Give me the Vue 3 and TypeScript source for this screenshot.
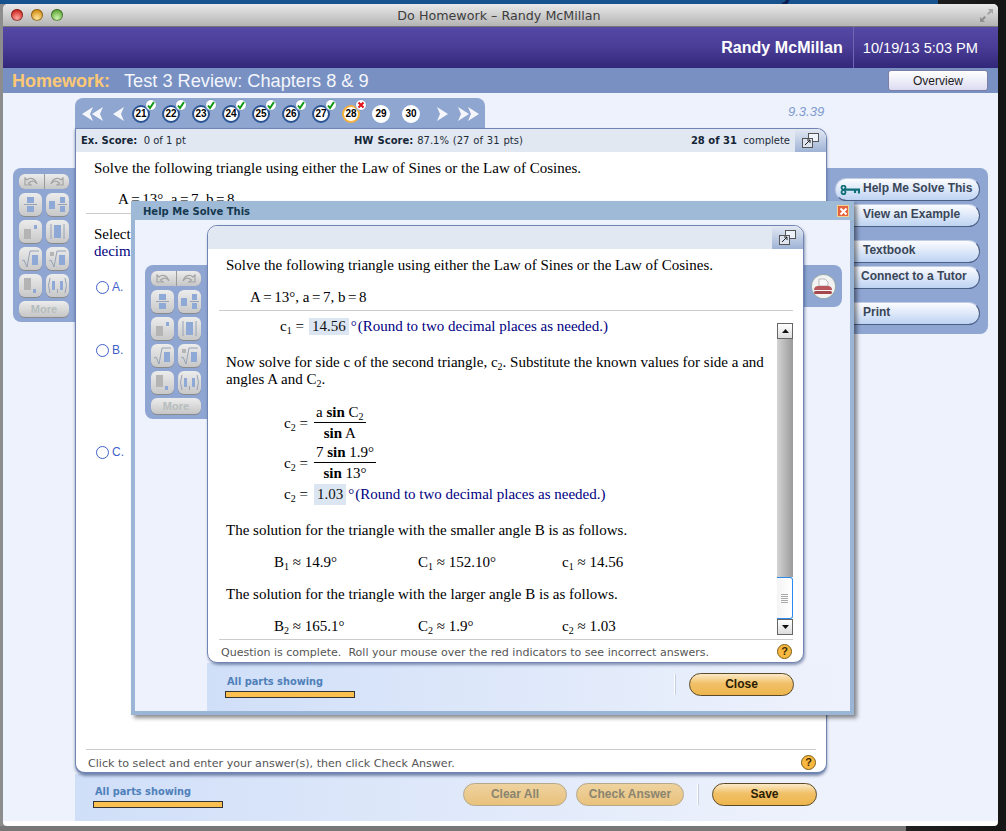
<script setup lang="ts">
interface Q { n: number; state: 'ok' | 'bad' | 'none' }
const questions: Q[] = [
  { n: 21, state: 'ok' }, { n: 22, state: 'ok' }, { n: 23, state: 'ok' }, { n: 24, state: 'ok' },
  { n: 25, state: 'ok' }, { n: 26, state: 'ok' }, { n: 27, state: 'ok' }, { n: 28, state: 'bad' },
  { n: 29, state: 'none' }, { n: 30, state: 'none' },
]
const B = '#8fa9d6'
const G = '#b4b4b4'
const tools = [
  { r: [[8, 4, 7, 6, B], [8, 13, 7, 6, B]], p: ['M5 11.5H18'] },
  { r: [[3, 8, 6, 8, B], [14, 4, 5, 6, B], [14, 13, 5, 6, B]], p: ['M12 11.5H21'] },
  { r: [[5, 9, 7, 10, G], [15, 5, 3, 4, B]], p: [] },
  { r: [[8, 5, 7, 13, B]], p: ['M5 4V19', 'M18 4V19'] },
  { r: [[13, 8, 6, 10, B]], p: ['M3 14L5 13L8 20L11 4H20'] },
  { r: [[13, 8, 6, 10, B], [4, 5, 4, 4, G]], p: ['M3 14L5 13L8 20L11 4H20'] },
  { r: [[5, 4, 7, 12, G], [14, 15, 3, 4, B]], p: [] },
  { r: [[6, 7, 3, 9, B], [14, 7, 3, 9, B]], p: ['M4 4Q1 11.5 4 19', 'M19 4Q22 11.5 19 19', 'M11.5 15V19'] },
]
</script>

<template>
  <div class="desk">
    <div class="topstrip"><span class="brand">MyMathLab</span></div>
    <div class="window">
      <div class="titlebar">
        <span class="light red"></span><span class="light amber"></span><span class="light green"></span>
        <span class="wintitle">Do Homework – Randy McMillan</span>
        <svg class="winexpand" width="15" height="15" viewBox="0 0 15 15">
          <path d="M9 1H14V6L12.3 4.3L9.5 7L8 5.5L10.7 2.7Z" fill="#a6a6a6" />
          <path d="M6 14H1V9L2.7 10.7L5.5 8L7 9.5L4.3 12.3Z" fill="#8f8f8f" />
        </svg>
      </div>
      <header class="header">
        <span class="uname">Randy McMillan</span>
        <span class="utime">10/19/13 5:03 PM</span>
      </header>
      <div class="subbar">
        <span class="hw">Homework:</span>
        <span class="hwtitle">Test 3 Review: Chapters 8 &amp; 9</span>
        <button class="overview">Overview</button>
      </div>

      <div class="content">
        <div class="leftcol">
          <div class="palette">
            <div class="undo">
              <span><svg width="16" height="10" viewBox="0 0 16 10"><path d="M2 1V8H8L5.5 6C9 3 12 4 14 7C12 1 7 0 4 3Z" fill="none" stroke="#a3a3a3" stroke-width="1.2" /></svg></span>
              <span><svg width="16" height="10" viewBox="0 0 16 10"><path d="M14 1V8H8L10.5 6C7 3 4 4 2 7C4 1 9 0 12 3Z" fill="none" stroke="#a3a3a3" stroke-width="1.2" /></svg></span>
            </div>
            <div class="toolgrid">
              <span v-for="(t, i) in tools" :key="i" class="tool">
                <svg width="23" height="23" viewBox="0 0 23 23">
                  <rect v-for="(r, j) in t.r" :key="j" :x="r[0]" :y="r[1]" :width="r[2]" :height="r[3]" :fill="String(r[4])" />
                  <path v-for="(d, k) in t.p" :key="k" :d="d" fill="none" stroke="#97a3b5" stroke-width="1" />
                </svg>
              </span>
            </div>
            <div class="more">More</div>
          </div>
        </div>

        <div class="center">
          <div class="navrow">
            <nav class="tabs">
              <svg class="arrow dbl" width="21" height="14" viewBox="0 0 21 14"><path d="M0 7L11 0L8 7L11 14Z M10 7L21 0L18 7L21 14Z" fill="#f4f6fb" /></svg>
              <svg class="arrow" width="11" height="14" viewBox="0 0 11 14"><path d="M0 7L11 0L8 7L11 14Z" fill="#f4f6fb" /></svg>
              <div class="qs">
                <span v-for="q in questions" :key="q.n" class="q" :class="{ plain: q.state === 'none', cur: q.n === 28 }">
                  {{ q.n }}
                  <span v-if="q.state !== 'none'" class="badge">
                    <svg v-if="q.state === 'ok'" width="10" height="10" viewBox="0 0 10 10"><path d="M2 5.5L4 8L8 2" fill="none" stroke="#119a18" stroke-width="2" /></svg>
                    <svg v-else width="10" height="10" viewBox="0 0 10 10"><path d="M2.5 2.5L7.5 7.5M7.5 2.5L2.5 7.5" fill="none" stroke="#e0131a" stroke-width="2" /></svg>
                  </span>
                </span>
              </div>
              <svg class="arrow next" width="11" height="14" viewBox="0 0 11 14"><path d="M11 7L0 0L3 7L0 14Z" fill="#f4f6fb" /></svg>
              <svg class="arrow last" width="21" height="14" viewBox="0 0 21 14"><path d="M11 7L0 0L3 7L0 14Z M21 7L10 0L13 7L10 14Z" fill="#f4f6fb" /></svg>
            </nav>
            <span class="version">9.3.39</span>
          </div>

          <main class="card">
            <div class="cardhead">
              <span class="ex"><b>Ex. Score:</b>&nbsp; 0 of 1 pt</span>
              <span class="hwscore"><b>HW Score:</b> 87.1% (27 of 31 pts)</span>
              <span class="done"><b>28 of 31</b>&nbsp; complete</span>
              <span class="expand">
                <svg width="17" height="15" viewBox="0 0 17 15"><rect x="6.5" y="0.5" width="10" height="8" fill="#eef2fa" stroke="#555" /><rect x="0.5" y="5.5" width="10" height="9" fill="#dfe5f0" stroke="#555" /><path d="M3 12L8 7M5 7H8V10" fill="none" stroke="#222" /></svg>
              </span>
            </div>
            <div class="cardbody">
              <p class="stem">Solve the following triangle using either the Law of Sines or the Law of Cosines.</p>
              <p class="given">A<i class="op">=</i>13°, a<i class="op">=</i>7, b<i class="op">=</i>8</p>
              <div class="rule r1"></div>
              <p class="select">Select</p>
              <p class="decim">decim</p>
              <div class="choice ca"><i class="radio"></i>A.</div>
              <div class="choice cb"><i class="radio"></i>B.</div>
              <div class="choice cc"><i class="radio"></i>C.</div>
            </div>
            <div class="cardfoot">
              <span class="foottext">Click to select and enter your answer(s), then click Check Answer.</span>
              <span class="help">?</span>
            </div>
          </main>

          <div class="bottombar">
            <div class="parts">
              <span>All parts showing</span>
              <i class="progress"></i>
            </div>
            <button class="pill dim clear">Clear All</button>
            <button class="pill dim check">Check Answer</button>
            <i class="sep"></i>
            <button class="pill save">Save</button>
          </div>
        </div>

        <aside class="sidepanel">
          <button class="side">
            <svg class="key" width="20" height="10" viewBox="0 0 20 10"><circle cx="3.5" cy="2.6" r="2" fill="none" stroke="#0f6f78" stroke-width="1.8" /><circle cx="3.5" cy="7.2" r="2" fill="none" stroke="#0f6f78" stroke-width="1.8" /><path d="M5 4.6H19V8.5M15 4.6V8" fill="none" stroke="#0f6f78" stroke-width="2.2" /></svg>
            Help Me Solve This
          </button>
          <button class="side">View an Example</button>
          <button class="side gap">Textbook</button>
          <button class="side tutor">Connect to a Tutor</button>
          <button class="side gap">Print</button>
        </aside>
      </div>

      <section class="dialog">
        <div class="dlgtitle">
          <span>Help Me Solve This</span>
          <i class="close"><svg width="11" height="11" viewBox="0 0 11 11"><path d="M2.5 2.5L8.5 8.5M8.5 2.5L2.5 8.5" stroke="#fff" stroke-width="2" /></svg></i>
        </div>
        <div class="dlgmain">
          <div class="palette dpal">
            <div class="undo">
              <span><svg width="16" height="10" viewBox="0 0 16 10"><path d="M2 1V8H8L5.5 6C9 3 12 4 14 7C12 1 7 0 4 3Z" fill="none" stroke="#a3a3a3" stroke-width="1.2" /></svg></span>
              <span><svg width="16" height="10" viewBox="0 0 16 10"><path d="M14 1V8H8L10.5 6C7 3 4 4 2 7C4 1 9 0 12 3Z" fill="none" stroke="#a3a3a3" stroke-width="1.2" /></svg></span>
            </div>
            <div class="toolgrid">
              <span v-for="(t, i) in tools" :key="i" class="tool">
                <svg width="23" height="23" viewBox="0 0 23 23">
                  <rect v-for="(r, j) in t.r" :key="j" :x="r[0]" :y="r[1]" :width="r[2]" :height="r[3]" :fill="String(r[4])" />
                  <path v-for="(d, k) in t.p" :key="k" :d="d" fill="none" stroke="#97a3b5" stroke-width="1" />
                </svg>
              </span>
            </div>
            <div class="more">More</div>
          </div>

          <div class="dlgcol">
            <div class="dcard">
              <div class="dcardhead">
                <span class="expand">
                  <svg width="17" height="15" viewBox="0 0 17 15"><rect x="6.5" y="0.5" width="10" height="8" fill="#eef2fa" stroke="#555" /><rect x="0.5" y="5.5" width="10" height="9" fill="#dfe5f0" stroke="#555" /><path d="M3 12L8 7M5 7H8V10" fill="none" stroke="#222" /></svg>
                </span>
              </div>
              <p class="dstem">Solve the following triangle using either the Law of Sines or the Law of Cosines.</p>
              <p class="dgiven">A<i class="op">=</i>13°, a<i class="op">=</i>7, b<i class="op">=</i>8</p>
              <div class="scroller">
                <div class="scrolltext">
                  <div class="ln eq c1"><span>c<sub>1</sub> =</span><mark>14.56</mark><span class="navy deg">°</span><span class="navy">(Round to two decimal places as needed.)</span></div>
                  <p class="ln now">Now solve for side c of the second triangle, c<sub>2</sub>. Substitute the known values for side a and<br />angles A and C<sub>2</sub>.</p>
                  <div class="fracrow first">
                    <span class="flabel">c<sub>2</sub> =</span>
                    <span class="frac"><span class="num">a <b>sin</b> C<sub>2</sub></span><span class="den"><b>sin</b> A</span></span>
                  </div>
                  <div class="fracrow">
                    <span class="flabel">c<sub>2</sub> =</span>
                    <span class="frac"><span class="num">7 <b>sin</b> 1.9°</span><span class="den"><b>sin</b> 13°</span></span>
                  </div>
                  <div class="ln eq c2line"><span>c<sub>2</sub> =</span><mark>1.03</mark><span class="navy deg">°</span><span class="navy">(Round to two decimal places as needed.)</span></div>
                  <p class="ln sol">The solution for the triangle with the smaller angle B is as follows.</p>
                  <div class="triple"><span>B<sub>1</sub> ≈ 14.9°</span><span>C<sub>1</sub> ≈ 152.10°</span><span>c<sub>1</sub> ≈ 14.56</span></div>
                  <p class="ln sol2">The solution for the triangle with the larger angle B is as follows.</p>
                  <div class="triple"><span>B<sub>2</sub> ≈ 165.1°</span><span>C<sub>2</sub> ≈ 1.9°</span><span>c<sub>2</sub> ≈ 1.03</span></div>
                </div>
                <div class="scrollbar">
                  <i class="sbtn"><svg width="9" height="6" viewBox="0 0 9 6"><path d="M4.5 1L8 5H1Z" fill="#111" /></svg></i>
                  <i class="track"></i>
                  <i class="thumb"><svg width="7" height="9" viewBox="0 0 7 9"><path d="M0 .5H7M0 2.5H7M0 4.5H7M0 6.5H7M0 8.5H7" stroke="#aaa" /></svg></i>
                  <i class="sbtn"><svg width="9" height="6" viewBox="0 0 9 6"><path d="M4.5 5L8 1H1Z" fill="#111" /></svg></i>
                </div>
              </div>
              <div class="dfoot">
                <span class="foottext">Question is complete.&nbsp; Roll your mouse over the red indicators to see incorrect answers.</span>
                <span class="help">?</span>
              </div>
            </div>
            <div class="dbar">
              <div class="parts">
                <span>All parts showing</span>
                <i class="progress"></i>
              </div>
              <i class="sep"></i>
              <button class="pill save">Close</button>
            </div>
          </div>

          <div class="printpanel">
            <span class="printbtn">
              <svg width="20" height="17" viewBox="0 0 20 17"><path d="M6 1H12L15 4V8H6Z" fill="#fafafa" stroke="#b9b9b9" /><path d="M1 11Q2 8 5 8H15Q18 8 19 11V12H1Z" fill="#b9585c" /><rect x="1" y="13" width="18" height="3" rx="1.5" fill="#a6474d" /></svg>
            </span>
          </div>
        </div>
      </section>
    </div>
  </div>
</template>

<style>
html, body { margin: 0; padding: 0; overflow: hidden; background: #222; }
</style>

<style scoped>
.desk {
  position: relative; width: 1006px; height: 831px; overflow: hidden;
  background: linear-gradient(90deg, #8d8d8d 0, #8d8d8d 3px, #161616 998px, #161616 100%);
  font-family: "Liberation Sans", Arial, sans-serif;
}
.desk::after {
  content: ""; position: absolute; left: 0; right: 100px; bottom: 0; height: 5px; background: #777;
}
.topstrip { height: 4px; width: 938px; background: #17528f; overflow: hidden; position: relative; }
.brand {
  position: absolute; left: 759px; top: -23px; font: bold 25px "Liberation Sans", sans-serif; color: #0b1d4e; letter-spacing: 1px; white-space: nowrap;
}
.window {
  position: relative; z-index: 1; width: 995px; height: 822px; margin-left: 3px;
  background: #fff; border-radius: 5px 5px 4px 4px; display: flex; flex-direction: column; overflow: hidden;
}
.titlebar {
  height: 23px; flex: none; position: relative; display: flex; align-items: center; justify-content: center;
  background: linear-gradient(#e9e9e9, #b4b4b4); border-bottom: 1px solid #777; box-sizing: border-box;
}
.light { position: absolute; top: 5px; width: 12px; height: 12px; border-radius: 50%; box-shadow: inset 0 0 0 1px rgba(0,0,0,.35); }
.red { left: 8px; background: radial-gradient(circle at 50% 75%, #ffa8a0, #cf2a24 70%); }
.amber { left: 28px; background: radial-gradient(circle at 50% 75%, #ffe59a, #d4901a 70%); }
.green { left: 48px; background: radial-gradient(circle at 50% 75%, #cdf5ad, #62a83a 70%); }
.wintitle { font: 12.7px "DejaVu Sans", sans-serif; color: #3d3d3d; margin-right: 3px; }
.winexpand { position: absolute; right: 4px; top: 4px; }
.header {
  height: 41px; flex: none; display: flex; align-items: center; justify-content: flex-end; box-sizing: border-box;
  background: linear-gradient(#5648a6, #4a3e98 45%, #33277a); color: #fff;
}
.uname { font-weight: bold; font-size: 16px; padding-right: 10px; letter-spacing: 0.05px; }
.utime { font-size: 14.6px; height: 100%; display: flex; align-items: center; padding: 0 20px 0 9px; border-left: 1px solid #6f67b4; }
.subbar { height: 25px; flex: none; display: flex; align-items: center; background: #7891c2; padding: 1px 10px 0 9px; box-sizing: border-box; }
.hw { color: #fdc875; font-weight: bold; font-size: 18px; }
.hwtitle { color: #f4f6fc; font-size: 18.2px; margin-left: 14px; }
.overview {
  margin: -1px 0 0 auto; width: 100px; height: 21px; padding: 0; border: 1px solid #7c7ea5; border-radius: 3px;
  background: linear-gradient(#fff, #dcdcf2); font: 12px "Liberation Sans", sans-serif; color: #1c1c1c;
}
.content { flex: none; height: 728px; display: flex; background: #eef2fc; }
.leftcol { width: 72px; flex: none; padding: 75px 0 0 10px; box-sizing: border-box; }
.palette {
  width: 62px; height: 154px; box-sizing: border-box; background: #8fa6d3; border-radius: 8px 0 0 8px; padding: 6px 0 0 6px;
}
.undo { display: flex; width: 50px; height: 15px; border-radius: 6px; overflow: hidden; gap: 1px; background: #9a9a9a; }
.undo span { flex: 1; display: flex; align-items: center; justify-content: center; background: linear-gradient(#ececec, #c6c6c6); }
.toolgrid { display: grid; grid-template-columns: 23px 23px; gap: 4px; margin-top: 4px; }
.tool { width: 23px; height: 23px; border-radius: 6px; background: linear-gradient(#ececec, #c8c8c8); box-shadow: 0 1px 0 #8a8a8a; display: block; }
.tool svg { display: block; }
.more {
  width: 50px; height: 16px; margin-top: 4px; border-radius: 6px; background: linear-gradient(#ececec, #c6c6c6);
  text-align: center; font: bold 11px/16px "Liberation Sans", sans-serif; color: #b6bdbd; box-shadow: 0 1px 0 #8a8a8a;
}
.center { width: 752px; flex: none; padding-top: 5px; box-sizing: border-box; display: flex; flex-direction: column; }
.navrow { display: flex; height: 31px; flex: none; position: relative; }
.tabs {
  width: 410px; height: 31px; box-sizing: border-box; background: #8fa6d0; border-radius: 8px 8px 0 0;
  display: flex; align-items: center; padding: 0 7px;
}
.arrow { flex: none; }
.arrow.dbl + .arrow { margin-left: 10px; }
.arrow.last { margin-left: 10px; }
.qs { display: flex; gap: 12px; margin: 0 17px 0 8px; }
.q {
  position: relative; width: 18px; height: 18px; box-sizing: border-box; border-radius: 50%; background: #fff; border: 2.5px solid #2c5493;
  font: bold 10px/13px "Liberation Sans", sans-serif; color: #000; text-align: center;
}
.q.plain { border-color: #fff; }
.q.cur { border-color: #f7b23c; }
.badge {
  position: absolute; left: 11px; top: -8px; width: 12px; height: 12px; border-radius: 50%; background: #fff; border: 1px solid #7f9ac7; box-sizing: border-box;
  display: flex; align-items: center; justify-content: center;
}
.version { position: absolute; left: 713px; top: 6px; font: italic 13px "Liberation Sans", sans-serif; color: #7f9bd0; }
.card {
  height: 646px; margin-top: -1px; flex: none; background: #fff; border: 1px solid #7085b3; border-bottom-width: 2px;
  border-radius: 0 10px 10px 10px; box-sizing: border-box; display: flex; flex-direction: column; box-shadow: 0 2px 3px rgba(40,60,110,.55); position: relative;
}
.cardhead {
  height: 23px; flex: none; background: #e2e8f2; display: flex; align-items: center; position: relative;
  font: 10px "DejaVu Sans", sans-serif; color: #1c2c38; border-radius: 0 10px 0 0; padding-left: 5px;
}
.cardhead b { color: #142636; }
.hwscore { position: absolute; left: 278px; word-spacing: 0.7px; }
.done { position: absolute; right: 36px; }
.expand {
  position: absolute; right: 0; top: 0; width: 31px; height: 100%; display: flex; align-items: center; justify-content: center;
  background: linear-gradient(#e2e8f2, #9fb3d6); border-radius: 0 10px 0 0;
}
.op { font-style: normal; margin: 0 2.5px; }
.cardbody { flex: 1; position: relative; font: 15px/17px "Liberation Serif", serif; color: #000; }
.cardbody p { margin: 0; }
.stem { padding: 8px 0 0 18px; }
.given { padding: 14px 0 0 42px; }
.rule { height: 1px; background: #ccc; }
.r1 { margin: 5px 10px 0 10px; }
.select { padding: 12px 0 0 18px; }
.decim { padding-left: 18px; color: #00007f; }
.choice { display: flex; align-items: center; gap: 3px; font: 12px/14px "Liberation Sans", sans-serif; color: #3f5fc9; padding-left: 20px; }
.radio { width: 11px; height: 11px; border: 1.5px solid #3f5fc9; border-radius: 50%; display: block; background: #fff; }
.ca { margin-top: 20px; }
.cb { margin-top: 49px; }
.cc { margin-top: 88px; }
.cardfoot {
  margin: 0 10px; height: 23px; flex: none; border-top: 1px solid #ccc; display: flex; align-items: center; justify-content: space-between;
  padding: 3px 0 0 2px; box-sizing: border-box; font: 11.1px "DejaVu Sans", sans-serif; color: #555;
}
.foottext { padding-top: 2px; }
.help {
  width: 15px; height: 15px; box-sizing: border-box; border: 1px solid #7d6016; border-radius: 50%; background: #f9b83f;
  font: bold 11px/13px "Liberation Sans", sans-serif; text-align: center; color: #3a2a06; flex: none;
}
.bottombar {
  height: 47px; flex: none; display: flex; align-items: flex-start; padding: 9px 10px 0 18px; box-sizing: border-box;
  background: linear-gradient(90deg, #d0dff8, #eef2fc);
}
.parts { width: 130px; display: flex; flex-direction: column; gap: 3px; font: bold 9.8px/12px "DejaVu Sans", sans-serif; color: #4f80b9; padding-top: 3px; }
.parts span { padding-left: 2px; }
.progress { display: block; height: 7px; box-sizing: border-box; background: #fbc04f; border: 1px solid #333; }
.pill {
  height: 23px; border-radius: 12px; padding: 0 0 2px; border: 1px solid #5a4a2a;
  background: linear-gradient(#fbeac8, #f1c067 45%, #edb54c); font: bold 12px "Liberation Sans", sans-serif; color: #2a1d05;
}
.dim { border-color: #b5a88a; color: #8a8570; background: linear-gradient(#eed29f, #e9c27c); }
.clear { width: 104px; margin-left: 240px; }
.check { width: 108px; margin-left: 9px; }
.sep { display: block; width: 1px; height: 21px; background: #fff; margin: 1px 14px 0 13px; box-shadow: 1px 0 0 #c8d0e0; }
.save { width: 105px; }
.sidepanel {
  width: 161px; height: 166px; margin-top: 75px; flex: none; box-sizing: border-box; background: #8fa6d3; border-radius: 0 8px 8px 0;
  padding: 10px 0 0 8px; display: flex; flex-direction: column; gap: 3px;
}
.side {
  width: 145px; height: 23px; padding: 0 0 3px 27px; flex: none; text-align: left; position: relative; border: 1px solid #4c5f85; border-top-color: #c0cde5; border-left-color: #c0cde5;
  border-radius: 12px; background: linear-gradient(#fbfcff, #bed3f2); font: bold 12px "Liberation Sans", sans-serif; color: #3a4658;
}
.side.gap { margin-top: 10px; }
.side.tutor { padding-left: 25px; }
.key { position: absolute; left: 4px; top: 6px; }

.dialog {
  position: absolute; left: 128px; top: 197px; width: 723px; height: 514px; box-sizing: border-box; background: #eef2fc;
  border: 4px solid #9ab5d5; border-top: 0; box-shadow: 3px 3px 4px rgba(0,0,0,.45); display: flex; flex-direction: column;
}
.dlgtitle {
  height: 19px; margin: 0 -4px; flex: none; background: #9fbad7; display: flex; align-items: center; justify-content: space-between;
  padding: 1px 5px 0 12px; box-sizing: border-box; font: bold 10px "DejaVu Sans", sans-serif; color: #15384f;
}
.close { width: 12px; height: 12px; display: flex; align-items: center; justify-content: center; background: #e5613f; border: 1px solid #f3d28e; box-sizing: border-box; }
.close svg { flex: none; }
.dlgmain { flex: 1; display: flex; align-items: flex-start; min-height: 0; }
.dpal { margin: 45px 0 0 10px; flex: none; }
.dlgcol { width: 642px; flex: none; display: flex; flex-direction: column; padding-top: 5px; height: 100%; box-sizing: border-box; }
.dcard {
  width: 597px; height: 438px; flex: none; box-sizing: border-box; background: #fff; border: 1px solid #7085b3; border-radius: 10px;
  box-shadow: 1px 2px 3px rgba(40,60,110,.5); position: relative; z-index: 2; display: flex; flex-direction: column;
  font: 15px/17px "Liberation Serif", serif; color: #000;
}
.dcardhead { height: 23px; flex: none; background: #e2e8f2; border-radius: 10px 10px 0 0; position: relative; }
.dcard p { margin: 0; }
.dstem { padding: 8px 0 0 18px; flex: none; }
.dgiven { padding: 15px 0 0 42px; flex: none; }
.scroller { margin: 4px 10px 0 11px; height: 330px; flex: none; border-top: 1px solid #ccc; border-bottom: 1px solid #ccc; display: flex; overflow: hidden; box-sizing: border-box; }
.scrolltext { flex: 1; padding: 7px 0 0 7px; min-width: 0; overflow: hidden; }
.scrolltext sub { font-size: 10px; line-height: 0; vertical-align: -3px; }
.ln { white-space: nowrap; }
.eq { display: flex; align-items: center; height: 17px; padding-left: 54px; }
.eq mark { background: #dce5f2; color: #111; padding: 0 3px; margin-left: 5px; }
.deg { margin: 0 1px 0 2px; }
.navy { color: #00007f; }
.now { margin-top: 19px !important; }
.fracrow { display: flex; align-items: center; padding-left: 58px; height: 40px; }
.fracrow.first { margin-top: 15px; }
.flabel { width: 30px; flex: none; }
.frac { display: inline-flex; flex-direction: column; align-items: center; }
.num { height: 19px; line-height: 19px; padding: 0 2px; border-bottom: 1px solid #000; white-space: nowrap; }
.den { height: 20px; line-height: 21px; white-space: nowrap; }
.c2line { padding-left: 58px; margin-top: 3px; }
.c2line mark { padding: 2px 3px; margin-left: 6px; }
.sol { margin-top: 19px !important; }
.sol2 { margin-top: 15px !important; }
.triple { display: grid; grid-template-columns: 144px 144px 144px; padding-left: 48px; margin-top: 15px; }
.scrollbar { width: 16px; flex: none; display: flex; flex-direction: column; padding: 12px 0 4px; box-sizing: border-box; }
.sbtn { height: 16px; flex: none; display: flex; align-items: center; justify-content: center; background: linear-gradient(#fff, #ddd); border: 1px solid #666; box-sizing: border-box; }
.track { flex: 1; background: linear-gradient(90deg, #d4d4d4, #9a9a9a); }
.thumb { height: 42px; flex: none; display: flex; align-items: center; justify-content: center; background: linear-gradient(90deg, #f4f4f4, #fff); border: 1px solid #2a8af0; border-left: 0; border-radius: 0 3px 3px 0; box-sizing: border-box; }
.dfoot {
  margin: 0 10px 0 11px; flex: 1; display: flex; align-items: center; justify-content: space-between;
  padding: 0 1px 0 2px; font: 11.05px "DejaVu Sans", sans-serif; color: #555;
}
.dbar { flex: 1; display: flex; align-items: flex-start; padding: 10px 55px 0 18px; background: linear-gradient(90deg, #d0dff8, #eef2fc); }
.dbar .sep { margin: 1px 14px 0 auto; }
.printpanel { width: 38px; height: 42px; margin: 45px 0 0 -45px; flex: none; background: #8fa6d3; border-radius: 0 8px 8px 0; display: flex; align-items: center; justify-content: center; position: relative; z-index: 1; }
.printbtn { width: 23px; height: 23px; border-radius: 50%; background: #f2f2f2; box-shadow: 0 0 0 1px #9aa; display: flex; align-items: center; justify-content: center; }
</style>
